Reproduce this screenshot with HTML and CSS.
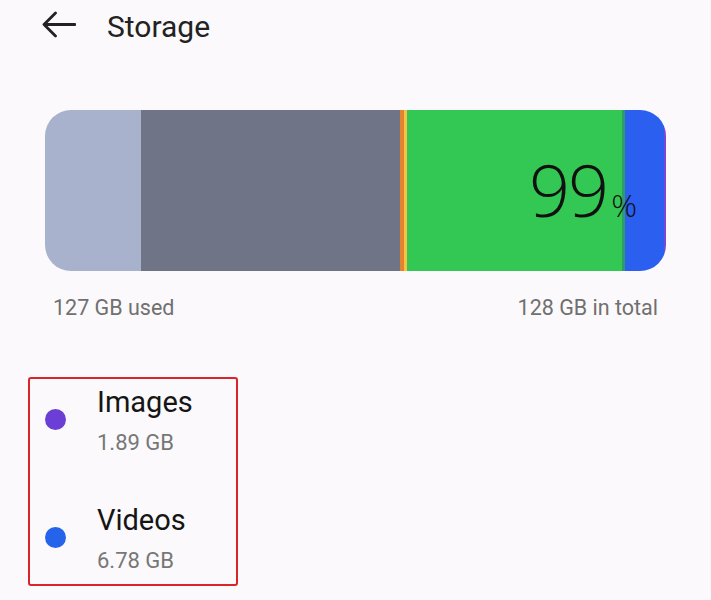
FILE: index.html
```html
<!DOCTYPE html>
<html lang="en">
<head>
<meta charset="UTF-8">
<meta name="viewport" content="width=device-width, initial-scale=1.0">
<title>Storage</title>
<link rel="stylesheet" href="styles.css">
</head>
<body>
<div class="topbar">
    <svg class="back" width="36" height="30" viewBox="0 0 36 30">
        <path d="M35 13.5H4M15.5 2L4 13.5L15.5 25" fill="none" stroke="#222" stroke-width="2.8" stroke-linecap="round" stroke-linejoin="round"/>
    </svg>
    <h1>Storage</h1>
</div>

<div class="usage">
    <div class="bar">
        <div class="seg seg-system"></div>
        <div class="seg seg-other"></div>
        <div class="seg seg-orange"></div>
        <div class="seg seg-yellow"></div>
        <div class="seg seg-apps"></div>
        <div class="seg seg-line"></div>
        <div class="seg seg-videos"></div>
        <div class="seg seg-images"></div>
    </div>
    <div class="percent">99<span>%</span></div>
</div>

<div class="totals">
    <span>127 GB used</span>
    <span>128 GB in total</span>
</div>

<div class="categories">
    <div class="cat">
        <span class="dot dot-images"></span>
        <div class="cat-text">
            <div class="cat-name">Images</div>
            <div class="cat-size">1.89 GB</div>
        </div>
    </div>
    <div class="cat">
        <span class="dot dot-videos"></span>
        <div class="cat-text">
            <div class="cat-name">Videos</div>
            <div class="cat-size">6.78 GB</div>
        </div>
    </div>
</div>
</body>
</html>
```

FILE: styles.css
```css
body {
    font-family: Roboto, "Noto Sans", Arial, sans-serif;
    margin: 0;
    padding: 0;
    background-color: #fbf9fb;
    color: #1a1a1a;
    width: 711px;
    height: 600px;
    overflow: hidden;
}

.topbar {
    display: flex;
    align-items: center;
    height: 52px;
    padding-left: 40px;
}

.back {
    display: block;
    margin-top: -1px;
}

.topbar h1 {
    margin: 0 0 0 31px;
    font-size: 30px;
    font-weight: 400;
    color: #222;
}

.usage {
    position: relative;
    margin: 58px 0 0 45px;
    width: 621px;
    height: 161px;
}

.bar {
    display: flex;
    height: 100%;
    border-radius: 26px;
    overflow: hidden;
}

.seg {
    height: 100%;
}

.seg-system { width: 96px; background-color: #a9b2cc; }
.seg-other { width: 259px; background-color: #6f7486; }
.seg-orange { width: 4px; background-color: #e38330; }
.seg-yellow { width: 3px; background-color: #f6c244; }
.seg-apps { width: 215px; background-color: #33c853; }
.seg-line { width: 3px; background-color: #2f9a6a; }
.seg-videos { width: 39px; background-color: #2b5ff0; }
.seg-images { width: 2px; background-color: #7b45d8; }

.percent {
    position: absolute;
    left: 484px;
    top: 43px;
    font-family: "Open Sans", Roboto, sans-serif;
    font-weight: 300;
    font-size: 72px;
    line-height: 1;
    color: #111;
    letter-spacing: -2px;
}

.percent span {
    font-size: 32px;
    margin-left: 4px;
    letter-spacing: 0;
}

.totals {
    display: flex;
    justify-content: space-between;
    padding: 0 53px;
    margin-top: 24px;
    font-size: 21.5px;
    color: #707070;
}

.categories {
    margin: 57px 0 0 28px;
    padding-top: 6px;
    width: 206px;
    height: 199px;
    border: 2px solid #d8242a;
    border-radius: 3px;
}

.cat {
    display: flex;
    align-items: center;
    padding-left: 15px;
}

.cat + .cat {
    margin-top: 47px;
}

.dot {
    width: 21px;
    height: 21px;
    border-radius: 50%;
    flex-shrink: 0;
    margin-top: -3px;
}

.dot-images { background-color: #6b3fd6; }
.dot-videos { background-color: #2563eb; }

.cat-text {
    margin-left: 31px;
}

.cat-name {
    font-size: 29px;
    color: #151515;
    line-height: 34px;
}

.cat-size {
    font-size: 22px;
    line-height: 26px;
    color: #777;
    margin-top: 11px;
}
```
